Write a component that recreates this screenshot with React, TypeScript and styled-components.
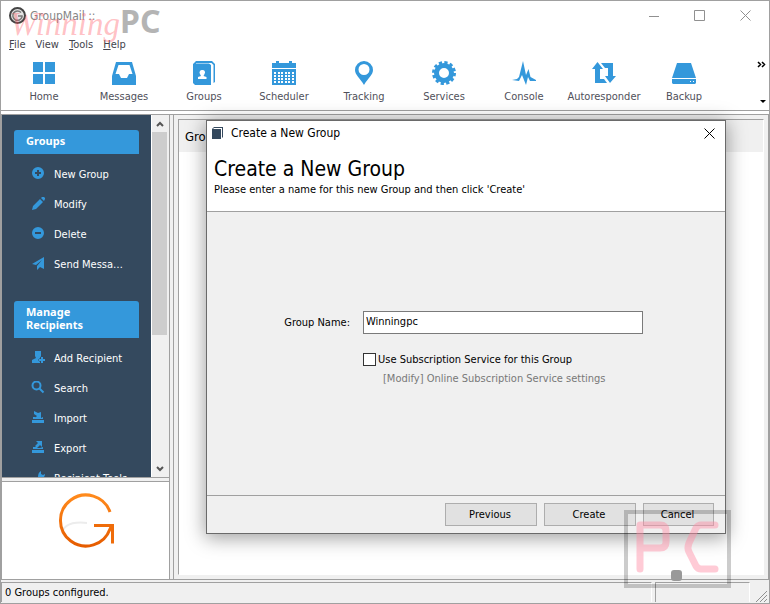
import React from "react";
import styled, { createGlobalStyle } from "styled-components";

const ui = `"DejaVu Sans Condensed", "Noto Sans", sans-serif`;
const line = "#a0a0a0";
const face = "#f0f0f0";
const blue = "#3498db";
const navy = "#34495e";

const GlobalStyle = createGlobalStyle`
  *, *::before, *::after { box-sizing: border-box; }
  body { margin: 0; background: #fff; font: 11px/14px ${ui}; color: #000; }
  button, input { font: inherit; color: inherit; }
  h1, h2, p, ul { margin: 0; padding: 0; }
  svg { display: block; flex: none; }
`;

const Window = styled.div`
  position: relative;
  display: flex;
  flex-direction: column;
  height: 100vh;
  border: 1px solid ${line};
  overflow: hidden;
`;

const TitleBar = styled.header`
  display: flex;
  align-items: center;
  height: 36px;
  padding: 0 18px 8px 8px;
  gap: 4px;
`;

const AppTitle = styled.span`
  flex: 1;
  padding-top: 2px;
  font-size: 12px;
  color: #858585;
`;

const Captions = styled.div`
  display: flex;
  gap: 35px;
`;

const CaptionButton = styled.button`
  display: flex;
  padding: 0;
  border: 0;
  background: none;
`;

const MenuBar = styled.nav`
  display: flex;
  gap: 10px;
  height: 16px;
  padding-left: 8px;
`;

const MenuButton = styled.button`
  padding: 0;
  border: 0;
  background: none;
  color: #44444c;
  line-height: 14px;
`;

const ToolBar = styled.nav`
  display: flex;
  justify-content: space-between;
  height: 58px;
  border-bottom: 1px solid ${line};
  padding: 8px 0 0 3px;
`;

const Tools = styled.div`
  display: flex;
`;

const ToolButton = styled.button`
  display: flex;
  flex-direction: column;
  align-items: center;
  gap: 5px;
  width: 80px;
  padding: 0;
  border: 0;
  background: none;
  color: #50505a;
`;

const Overflow = styled.div`
  display: flex;
  flex-direction: column;
  justify-content: space-between;
  align-items: flex-end;
  padding: 0 3px 6px 0;
`;

const Main = styled.main`
  display: flex;
  flex: 1;
  min-height: 0;
  margin-top: 3px;
  border: 1px solid ${line};
  background: ${face};
`;

const LeftColumn = styled.div`
  display: flex;
  flex-direction: column;
  width: 168px;
  border-right: 1px solid ${line};
`;

const Sidebar = styled.aside`
  display: flex;
  flex: 1;
  min-height: 0;
  border-bottom: 1px solid ${line};
`;

const SidebarContent = styled.div`
  display: flex;
  flex-direction: column;
  gap: 22px;
  flex: 1;
  min-width: 0;
  overflow: hidden;
  padding: 15px 12px 0;
  background: ${navy};
`;

const SidebarHeading = styled.h2`
  padding: 4px 36px 7px 12px;
  margin-bottom: 5px;
  border-radius: 3px 3px 0 0;
  background: ${blue};
  color: #fff;
  font: bold 11px/13px "Noto Sans", sans-serif;
`;

const SidebarItem = styled.button`
  display: flex;
  align-items: center;
  gap: 9px;
  width: 100%;
  height: 30px;
  padding: 0 12px 0 17px;
  border: 0;
  background: none;
  color: #fff;
  text-align: left;
`;

const ItemText = styled.span`
  padding-top: 2px;
  white-space: nowrap;
`;

const ScrollBar = styled.div`
  display: flex;
  flex-direction: column;
  align-items: center;
  width: 18px;
  border-left: 1px solid #fff;
  background: ${face};
`;

const ScrollArrow = styled.button`
  display: flex;
  align-items: center;
  justify-content: center;
  width: 100%;
  height: 17px;
  flex: none;
  padding: 0 2px 0 0;
  border: 0;
  background: none;
`;

const ScrollTrack = styled.div`
  flex: 1;
  width: 15px;
  align-self: flex-start;
`;

const ScrollThumb = styled.div`
  height: 62%;
  background: #cdcdcd;
`;

const BrandPanel = styled.div`
  display: flex;
  justify-content: center;
  height: 98px;
  margin-top: 3px;
  padding-top: 8px;
  border-top: 1px solid ${line};
  background: #fff;
`;

const RightColumn = styled.div`
  display: flex;
  flex: 1;
  min-width: 0;
  margin-left: 3px;
  padding: 4px;
  border-left: 1px solid ${line};
`;

const ListPanel = styled.section`
  flex: 1;
  border: 1px solid ${line};
  border-right-color: #fff;
  border-bottom-color: #fff;
  background: #fff;
`;

const ListHeading = styled.h2`
  height: 32px;
  padding-left: 6px;
  background: ${face};
  font-size: 13px;
  font-weight: normal;
  line-height: 34px;
`;

const StatusBar = styled.footer`
  display: flex;
  gap: 3px;
  height: 23px;
  padding: 2px 2px 1px 0;
  background: ${face};
`;

const StatusCell = styled.div<{ $grow?: boolean }>`
  ${(p) => (p.$grow ? "flex: 1;" : "width: 95px;")}
  padding-left: 3px;
  border-top: 1px solid ${line};
  border-left: 1px solid ${line};
  border-right: 1px solid #fff;
  line-height: 20px;
`;

const Grip = styled.div`
  display: flex;
  align-items: flex-end;
  justify-content: flex-end;
  width: 14px;
`;

const Dialog = styled.form`
  position: absolute;
  top: 119px;
  left: 205px;
  right: 43px;
  bottom: 69px;
  display: flex;
  flex-direction: column;
  border: 1px solid #6a6a6a;
  background: ${face};
  box-shadow: 0 3px 18px 1px rgba(0, 0, 0, 0.38);
`;

const DialogHeader = styled.header`
  height: 91px;
  border-bottom: 1px solid ${line};
  background: #fff;
`;

const DialogTitleBar = styled.div`
  display: flex;
  align-items: center;
  gap: 8px;
  height: 24px;
  padding: 0 10px 0 5px;
  font-size: 12px;
`;

const DialogTitle = styled.span`
  flex: 1;
`;

const Heading = styled.h1`
  padding: 10px 0 0 7px;
  font-size: 21px;
  font-weight: normal;
  line-height: 28px;
`;

const Hint = styled.p`
  padding-left: 7px;
`;

const DialogBody = styled.div`
  display: grid;
  grid-template-columns: 143px minmax(0, 280px);
  column-gap: 13px;
  align-content: start;
  flex: 1;
  padding: 99px 0 0;
`;

const FieldLabel = styled.label`
  justify-self: end;
  line-height: 24px;
`;

const TextInput = styled.input`
  width: 100%;
  height: 23px;
  padding: 0 2px 2px;
  border: 1px solid #7a7a7a;
  border-radius: 0;
  background: #fff;
  outline: none;
`;

const Option = styled.div`
  grid-column: 2;
  padding-top: 16px;
`;

const CheckLabel = styled.label`
  display: flex;
  align-items: center;
  gap: 2px;
  line-height: 18px;
  white-space: nowrap;
`;

const CheckBox = styled.input`
  appearance: none;
  flex: none;
  width: 13px;
  height: 13px;
  margin: 0 0 1px;
  border: 1px solid #333;
  background: #fff;
  &:checked { background: ${blue}; }
`;

const SettingsLink = styled.a`
  display: block;
  padding: 3px 0 0 20px;
  color: #787878;
  text-decoration: none;
  white-space: nowrap;
`;

const DialogFooter = styled.footer`
  display: flex;
  justify-content: flex-end;
  gap: 7px;
  height: 38px;
  padding: 7px 11px 0 0;
  border-top: 1px solid ${line};
`;

const PushButton = styled.button<{ $small?: boolean }>`
  width: ${(p) => (p.$small ? 71 : 92)}px;
  height: 23px;
  padding: 1px 2px 0 0;
  border: 1px solid #adadad;
  background: #e1e1e1;
`;

const Watermark = styled.div`
  position: absolute;
  top: 1px;
  left: 9px;
  display: flex;
  pointer-events: none;
`;

const WatermarkScript = styled.span`
  color: rgba(255, 80, 90, 0.36);
  font: italic 33px/44px "Liberation Serif", serif;
`;

const WatermarkBold = styled.span`
  color: #b4b4b4;
  font: bold 32px/38px "Noto Sans", sans-serif;
`;

const Emblem = styled.div`
  position: absolute;
  right: 38px;
  bottom: 15px;
  pointer-events: none;
`;

const calendarCells = [2, 6, 9, 13, 16, 20].flatMap((x) =>
  [11, 14, 17, 20].map((y) => `M${x} ${y}h2v2h-2z`)
).join("");

const art: Record<string, React.ReactNode> = {
  Home: <path d="M1 1h10v10H1zM13 1h10v10H13zM1 13h10v10H1zM13 13h10v10H13z" />,
  Messages: (
    <path fillRule="evenodd" d="M4 1h16l4 14v9H0v-9zM6.500 4 3.500 13h3.500l2 4h6l2-4h3.500l-3-9z" />
  ),
  Groups: (
    <>
      <path d="M4 0h16l3 3v18l-1.500 1V4l-2-2H4z" />
      <path d="M1 3l3-3v2.500h13l2 1.500v20H3l-2-2z" />
      <path fill="#fff" d="M10 9a2.500 2.500 0 0 0-2 4l1 2-3 1v2h8.500v-2l-3-1 1-2a2.500 2.500 0 0 0-2.500-4z" />
    </>
  ),
  Scheduler: (
    <>
      <path d="M0 2h4V0h3v2h10V0h3v2h4v5H0z" />
      <path d="M0 8h24v16H0z" />
      <path fill="#fff" d={calendarCells} />
    </>
  ),
  Tracking: (
    <path fillRule="evenodd" d="M12 0a9 9 0 0 1 9 9c0 5-5 8-9 15C8 17 3 14 3 9a9 9 0 0 1 9-9zm0 3a5.500 5.500 0 1 0 0 11 5.500 5.500 0 0 0 0-11z" />
  ),
  Services: (
    <>
      <circle cx="12" cy="12" r="7.500" fill="none" stroke={blue} strokeWidth="5" />
      <circle cx="12" cy="12" r="10.500" fill="none" stroke={blue} strokeWidth="3" strokeDasharray="3.200 2.300" />
    </>
  ),
  Console: <path d="M0 19l5-1 2-2L11 0l3 14 2.500-6 2 8 5.500 3v1h-6l-2-4-2 8-4-10-3 6z" />,
  Autoresponder: (
    <path d="M5.500 1L11 8H8v10h4l3 4H3V8H0zM9 2h12v13h3l-6 7-5-7h3V7h-3z" />
  ),
  Backup: (
    <path fillRule="evenodd" d="M5 2h14l5 15H0zM0 18h24v4l-1 1H1l-1-1zM18 20v1h1v-1zM21 20v1h1v-1z" />
  ),
};

const small: Record<string, React.ReactNode> = {
  plus: <path fillRule="evenodd" d="M6 0a6 6 0 1 0 0 12A6 6 0 0 0 6 0zM5 3h2v2h2v2H7v2H5V7H3V5h2z" />,
  minus: <path fillRule="evenodd" d="M6 0a6 6 0 1 0 0 12A6 6 0 0 0 6 0zM3 5h6v2H3z" />,
  pencil: <path d="M0 13l1-4 7-7 3 3-7 7zM9 1l1-1h2l1 1v1l-1 2z" />,
  plane: <path d="M12 0v12L8 10l-3 3V9l5-6-6 5-4-1z" />,
  person: (
    <>
      <path d="M3 0h6v5L8 7v5H0V9l4-2-1-2z" />
      <path d="M9 6h2v2h2v2h-2v2H9v-2H7V8h2z" stroke={navy} strokeWidth="1" paintOrder="stroke" />
    </>
  ),
  search: (
    <g fill="none" stroke={blue} strokeWidth="2">
      <circle cx="4.500" cy="4.500" r="4" />
      <path d="M7.500 7.500l4 4" />
    </g>
  ),
  importing: <path d="M0 9h12v3H0zM1 8V6h2l2 1h4l2-1v2zM2 0l4 2 3-1v6H3l2-2-3-2z" />,
  exporting: <path d="M0 9h12v3H0zM1 8V6h3l1 1h3l3-1v2zM4 0h6v6L8 4 5 7 3 5l3-3z" />,
  wrench: <path d="M9 0v3l2 1 2-1c0 3-2 4-4 4l-5 5-2-2 4-4C6 3 7 1 9 0z" />,
};

const SmallIcon = ({ name }: { name: string }) => (
  <svg width="14" height="14" viewBox="-1 0 14 14" fill={blue} aria-hidden="true">
    {small[name]}
  </svg>
);

const Cross = ({ color }: { color: string }) => (
  <svg width="11" height="11" viewBox="0 0 11 11" stroke={color} aria-hidden="true">
    <path d="M.5.500l10 10M10.500.500l-10 10" />
  </svg>
);

const Chevron = ({ up }: { up?: boolean }) => (
  <svg width="8" height="6" viewBox="0 0 8 6" fill="none" stroke="#555" strokeWidth="2" aria-hidden="true">
    <path d={up ? "M1 5l3-3 3 3" : "M1 1l3 3 3-3"} />
  </svg>
);

const menus = ["File", "View", "Tools", "Help"];

const groups = [
  {
    title: "Groups",
    items: [
      ["plus", "New Group"],
      ["pencil", "Modify"],
      ["minus", "Delete"],
      ["plane", "Send Messa…"],
    ],
  },
  {
    title: "Manage Recipients",
    items: [
      ["person", "Add Recipient"],
      ["search", "Search"],
      ["importing", "Import"],
      ["exporting", "Export"],
      ["wrench", "Recipient Tools"],
    ],
  },
];

export default function App() {
  return (
    <>
      <GlobalStyle />
      <Window>
        <TitleBar>
          <svg width="17" height="17" viewBox="0 0 17 17" fill="none" aria-hidden="true">
            <circle cx="8.500" cy="8.500" r="7.500" stroke="#444" strokeWidth="2" fill="#e4e4e4" />
            <path d="M12 5.500A4.700 4.700 0 1 0 13 10V9H9" stroke="#777" strokeWidth="1.500" />
          </svg>
          <AppTitle>GroupMail ::</AppTitle>
          <Captions>
            <CaptionButton aria-label="Minimize">
              <svg width="10" height="11" stroke="#909090"><path d="M0 6.500h10" /></svg>
            </CaptionButton>
            <CaptionButton aria-label="Maximize">
              <svg width="11" height="11" fill="none" stroke="#909090"><path d="M.5.500h10v10H.500z" /></svg>
            </CaptionButton>
            <CaptionButton aria-label="Close"><Cross color="#909090" /></CaptionButton>
          </Captions>
        </TitleBar>

        <MenuBar>
          {menus.map((m) => (
            <MenuButton key={m}>{m === "View" ? m : <><u>{m[0]}</u>{m.slice(1)}</>}</MenuButton>
          ))}
        </MenuBar>

        <ToolBar>
          <Tools>
            {Object.keys(art).map((name) => (
              <ToolButton key={name}>
                <svg width="24" height="24" viewBox="0 0 24 24" fill={blue} aria-hidden="true">{art[name]}</svg>
                {name}
              </ToolButton>
            ))}
          </Tools>
          <Overflow>
            <svg width="9" height="7" fill="none" stroke="#000" strokeWidth="1.500" aria-hidden="true">
              <path d="M1 1l2.500 2.500L1 6M5 1l2.500 2.500L5 6" />
            </svg>
            <svg width="7" height="4" aria-hidden="true"><path d="M1 0h6L4 3z" /></svg>
          </Overflow>
        </ToolBar>

        <Main>
          <LeftColumn>
            <Sidebar>
              <SidebarContent>
                {groups.map((g) => (
                  <section key={g.title}>
                    <SidebarHeading>{g.title}</SidebarHeading>
                    {g.items.map(([icon, label]) => (
                      <SidebarItem key={label}>
                        <SmallIcon name={icon} />
                        <ItemText>{label}</ItemText>
                      </SidebarItem>
                    ))}
                  </section>
                ))}
              </SidebarContent>
              <ScrollBar>
                <ScrollArrow aria-label="Scroll up"><Chevron up /></ScrollArrow>
                <ScrollTrack><ScrollThumb /></ScrollTrack>
                <ScrollArrow aria-label="Scroll down"><Chevron /></ScrollArrow>
              </ScrollBar>
            </Sidebar>
            <BrandPanel>
              <svg width="58" height="60" viewBox="0 0 58 60" fill="none" aria-label="GroupMail">
                <defs>
                  <linearGradient id="flame" x1="0" y1="0" x2="0" y2="1">
                    <stop offset="0" stopColor="#ff8a1c" />
                    <stop offset="1" stopColor="#e65c00" />
                  </linearGradient>
                </defs>
                <path d="M8 47C1 38 12 31 30 33" stroke="#ececec" strokeWidth="2" />
                <path d="M53 22A25.500 25.500 0 1 0 53 39L55 35" stroke="url(#flame)" strokeWidth="3" />
                <path d="M37 35.500h18.500v18" stroke="#ef6c0a" strokeWidth="3" />
              </svg>
            </BrandPanel>
          </LeftColumn>
          <RightColumn>
            <ListPanel>
              <ListHeading>Groups</ListHeading>
            </ListPanel>
          </RightColumn>
        </Main>

        <StatusBar>
          <StatusCell $grow>0 Groups configured.</StatusCell>
          <StatusCell />
          <Grip>
            <svg width="12" height="12" stroke="#909090" aria-hidden="true">
              <path d="M1 12L12 1M5 12l7-7M9 12l3-3" />
            </svg>
          </Grip>
        </StatusBar>

        <Dialog role="dialog" aria-labelledby="dialog-title" onSubmit={(e) => e.preventDefault()}>
          <DialogHeader>
            <DialogTitleBar>
              <svg width="11" height="12" viewBox="0 0 11 12" aria-hidden="true">
                <path d="M0 2l2-2h9v10l-1 1V1H2L1 2v10H0z" fill={navy} />
                <path d="M1 2h8v10H1z" fill={navy} />
              </svg>
              <DialogTitle>Create a New Group</DialogTitle>
              <CaptionButton type="button" aria-label="Close dialog"><Cross color="#000" /></CaptionButton>
            </DialogTitleBar>
            <Heading id="dialog-title">Create a New Group</Heading>
            <Hint>Please enter a name for this new Group and then click 'Create'</Hint>
          </DialogHeader>
          <DialogBody>
            <FieldLabel htmlFor="group-name">Group Name:</FieldLabel>
            <TextInput id="group-name" defaultValue="Winningpc" />
            <Option>
              <CheckLabel>
                <CheckBox type="checkbox" />
                Use Subscription Service for this Group
              </CheckLabel>
              <SettingsLink href="#settings">[Modify] Online Subscription Service settings</SettingsLink>
            </Option>
          </DialogBody>
          <DialogFooter>
            <PushButton type="button">Previous</PushButton>
            <PushButton type="submit">Create</PushButton>
            <PushButton type="button" $small>Cancel</PushButton>
          </DialogFooter>
        </Dialog>

        <Watermark>
          <WatermarkScript>Winning</WatermarkScript>
          <WatermarkBold>PC</WatermarkBold>
        </Watermark>
        <Emblem>
          <svg width="107" height="78" viewBox="0 0 107 78" fill="none" aria-label="PC">
            <path d="M2 2h103v74H2z" stroke="#000" strokeOpacity="0.2" strokeWidth="4" />
            <g stroke="#ff8ca5" strokeOpacity="0.45" strokeWidth="7" strokeLinecap="round" strokeLinejoin="round">
              <path d="M16 59V15h20q6 0 6 6v11q0 6-6 6H17" />
              <path d="M91 15H77q-3 0-5 3L65 33q-2 5 0 9l7 14q2 3 5 3h14" />
            </g>
            <rect x="47" y="60" width="11" height="11" rx="3" fill="#999" />
          </svg>
        </Emblem>
      </Window>
    </>
  );
}
